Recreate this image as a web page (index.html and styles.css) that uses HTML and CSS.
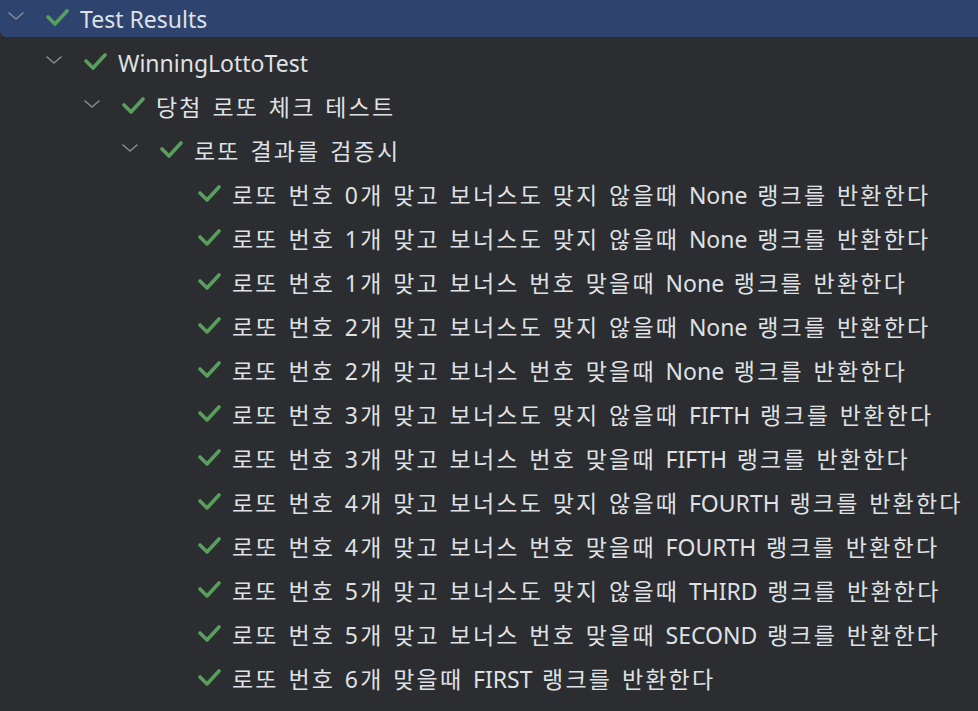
FILE: index.html
```html
<!DOCTYPE html>
<html lang="ko">
<head>
<meta charset="utf-8">
<link rel="stylesheet" href="styles.css">
</head>
<body>
<div class="tree">
  <div class="row selected lvl0">
    <svg class="chev" viewBox="0 0 16 8"><path d="M1 1 L8 7 L15 1"/></svg>
    <svg class="check" viewBox="0 0 24 20"><path d="M3 10 L10 17 L22 4"/></svg>
    <span class="label">Test Results</span>
  </div>
  <div class="row lvl1">
    <svg class="chev" viewBox="0 0 16 8"><path d="M1 1 L8 7 L15 1"/></svg>
    <svg class="check" viewBox="0 0 24 20"><path d="M3 10 L10 17 L22 4"/></svg>
    <span class="label">WinningLottoTest</span>
  </div>
  <div class="row lvl2">
    <svg class="chev" viewBox="0 0 16 8"><path d="M1 1 L8 7 L15 1"/></svg>
    <svg class="check" viewBox="0 0 24 20"><path d="M3 10 L10 17 L22 4"/></svg>
    <span class="label ko">당첨 로또 체크 테스트</span>
  </div>
  <div class="row lvl3">
    <svg class="chev" viewBox="0 0 16 8"><path d="M1 1 L8 7 L15 1"/></svg>
    <svg class="check" viewBox="0 0 24 20"><path d="M3 10 L10 17 L22 4"/></svg>
    <span class="label ko">로또 결과를 검증시</span>
  </div>
  <div class="row lvl4"><span class="chev-space"></span><svg class="check" viewBox="0 0 24 20"><path d="M3 10 L10 17 L22 4"/></svg><span class="label ko">로또 번호 0개 맞고 보너스도 맞지 않을때 <span class="en">None</span> 랭크를 반환한다</span></div>
  <div class="row lvl4"><span class="chev-space"></span><svg class="check" viewBox="0 0 24 20"><path d="M3 10 L10 17 L22 4"/></svg><span class="label ko">로또 번호 1개 맞고 보너스도 맞지 않을때 <span class="en">None</span> 랭크를 반환한다</span></div>
  <div class="row lvl4"><span class="chev-space"></span><svg class="check" viewBox="0 0 24 20"><path d="M3 10 L10 17 L22 4"/></svg><span class="label ko">로또 번호 1개 맞고 보너스 번호 맞을때 <span class="en">None</span> 랭크를 반환한다</span></div>
  <div class="row lvl4"><span class="chev-space"></span><svg class="check" viewBox="0 0 24 20"><path d="M3 10 L10 17 L22 4"/></svg><span class="label ko">로또 번호 2개 맞고 보너스도 맞지 않을때 <span class="en">None</span> 랭크를 반환한다</span></div>
  <div class="row lvl4"><span class="chev-space"></span><svg class="check" viewBox="0 0 24 20"><path d="M3 10 L10 17 L22 4"/></svg><span class="label ko">로또 번호 2개 맞고 보너스 번호 맞을때 <span class="en">None</span> 랭크를 반환한다</span></div>
  <div class="row lvl4"><span class="chev-space"></span><svg class="check" viewBox="0 0 24 20"><path d="M3 10 L10 17 L22 4"/></svg><span class="label ko">로또 번호 3개 맞고 보너스도 맞지 않을때 <span class="en">FIFTH</span> 랭크를 반환한다</span></div>
  <div class="row lvl4"><span class="chev-space"></span><svg class="check" viewBox="0 0 24 20"><path d="M3 10 L10 17 L22 4"/></svg><span class="label ko">로또 번호 3개 맞고 보너스 번호 맞을때 <span class="en">FIFTH</span> 랭크를 반환한다</span></div>
  <div class="row lvl4"><span class="chev-space"></span><svg class="check" viewBox="0 0 24 20"><path d="M3 10 L10 17 L22 4"/></svg><span class="label ko">로또 번호 4개 맞고 보너스도 맞지 않을때 <span class="en">FOURTH</span> 랭크를 반환한다</span></div>
  <div class="row lvl4"><span class="chev-space"></span><svg class="check" viewBox="0 0 24 20"><path d="M3 10 L10 17 L22 4"/></svg><span class="label ko">로또 번호 4개 맞고 보너스 번호 맞을때 <span class="en">FOURTH</span> 랭크를 반환한다</span></div>
  <div class="row lvl4"><span class="chev-space"></span><svg class="check" viewBox="0 0 24 20"><path d="M3 10 L10 17 L22 4"/></svg><span class="label ko">로또 번호 5개 맞고 보너스도 맞지 않을때 <span class="en">THIRD</span> 랭크를 반환한다</span></div>
  <div class="row lvl4"><span class="chev-space"></span><svg class="check" viewBox="0 0 24 20"><path d="M3 10 L10 17 L22 4"/></svg><span class="label ko">로또 번호 5개 맞고 보너스 번호 맞을때 <span class="en">SECOND</span> 랭크를 반환한다</span></div>
  <div class="row lvl4"><span class="chev-space"></span><svg class="check" viewBox="0 0 24 20"><path d="M3 10 L10 17 L22 4"/></svg><span class="label ko">로또 번호 6개 맞을때 <span class="en">FIRST</span> 랭크를 반환한다</span></div>
</div>
</body>
</html>
```
FILE: styles.css
```css
html, body {
  margin: 0;
  padding: 0;
  background: #2b2d30;
  height: 100%;
  overflow: hidden;
}
.tree {
  margin-top: -3px;
  font-family: "Noto Sans", "Noto Sans CJK KR", sans-serif;
  font-size: 23px;
  color: #dfe1e5;
}
.row {
  display: flex;
  align-items: center;
  height: 44px;
  box-sizing: border-box;
  white-space: nowrap;
}
.row.selected {
  background: #2e436e;
  height: 40px;
  padding-top: 4px;
  margin-bottom: 4px;
  border-bottom-left-radius: 6px;
}
.lvl0 { padding-left: 8px; }
.lvl1 { padding-left: 46px; }
.lvl2 { padding-left: 84px; }
.lvl3 { padding-left: 122px; }
.lvl4 { padding-left: 160px; }
.chev, .chev-space {
  width: 16px;
  height: 8px;
  flex: none;
  margin-top: -6px;
}
.chev path {
  fill: none;
  stroke: #868a91;
  stroke-width: 1.6;
  stroke-linecap: round;
  stroke-linejoin: round;
}
.check {
  width: 24px;
  height: 20px;
  flex: none;
  margin-left: 21px;
  margin-top: -5px;
}
.check path {
  fill: none;
  stroke: #57a05c;
  stroke-width: 3.6;
  stroke-linecap: round;
  stroke-linejoin: round;
}
.label {
  margin-left: 11px;
  line-height: 1;
}
.label.ko {
  letter-spacing: 2.2px;
  word-spacing: 1.5px;
}
.label .en {
  letter-spacing: 0;
}
```
